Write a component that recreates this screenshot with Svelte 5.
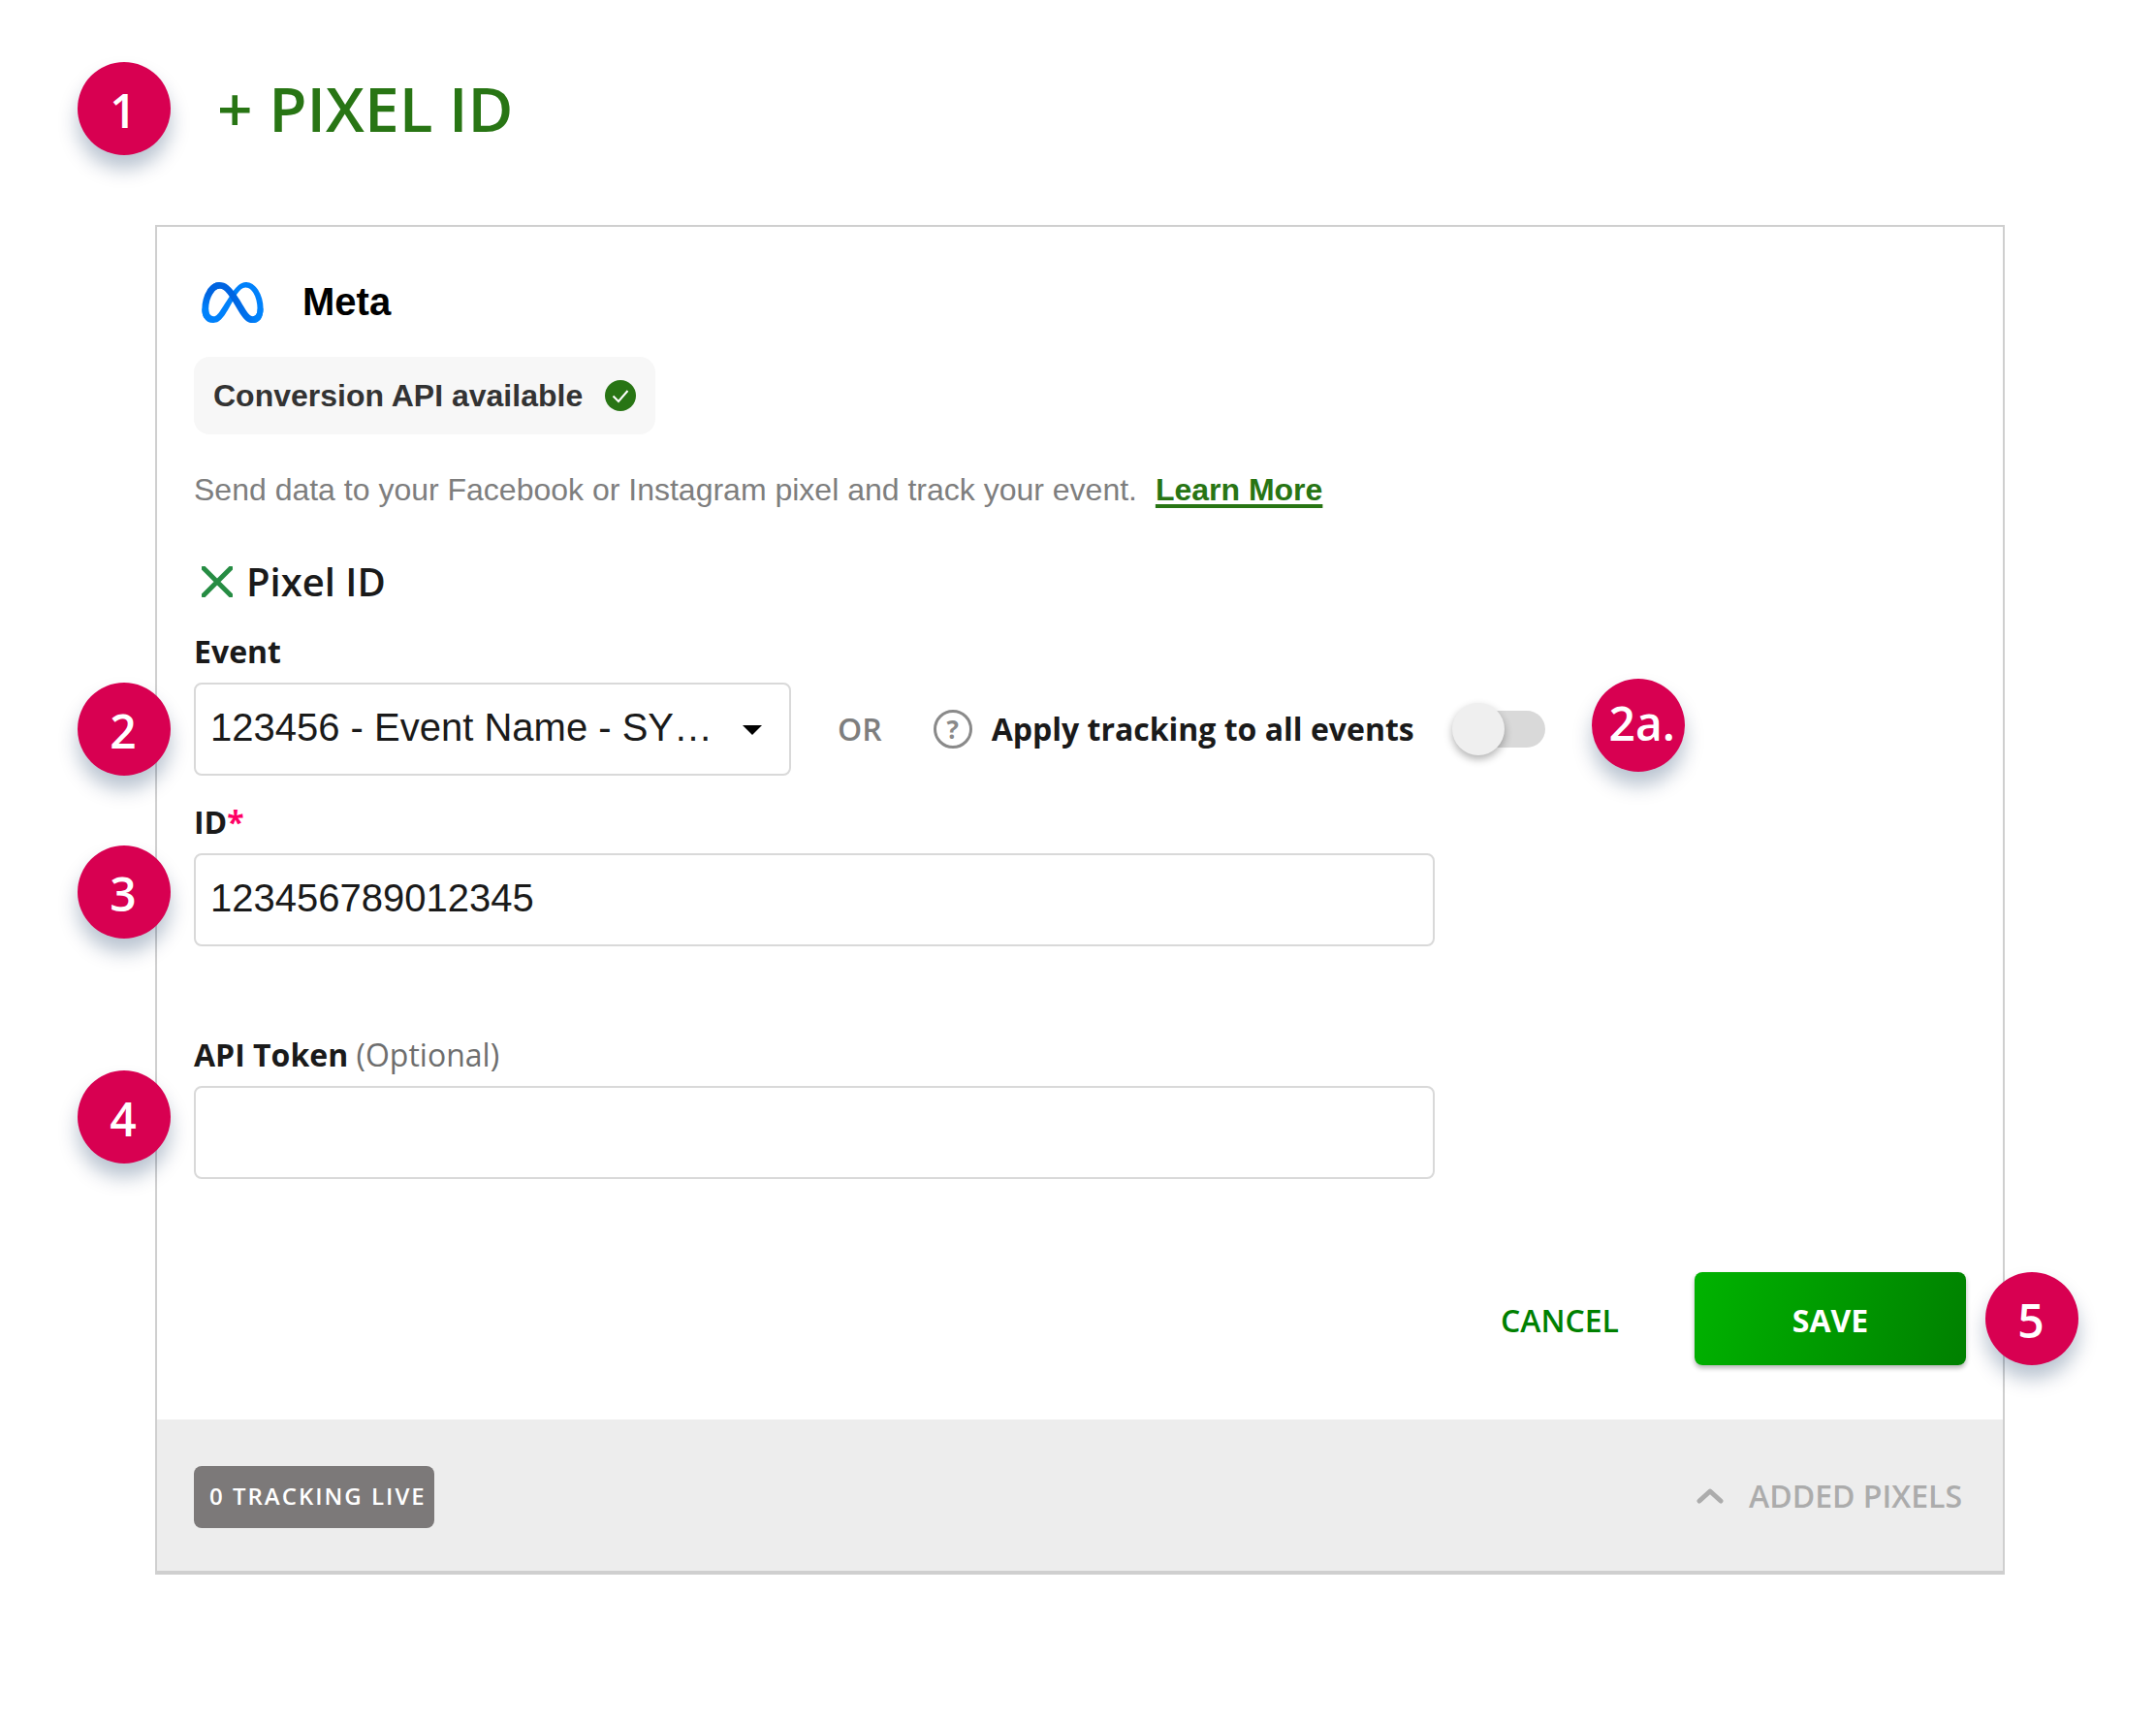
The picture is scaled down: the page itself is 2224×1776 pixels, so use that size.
<script>
  let event = "123456";
  let allEvents = false;
  let pixelId = "123456789012345";
  let apiToken = "";

  const events = [{ id: "123456", label: "123456 - Event Name - SY…" }];
</script>

<style>
  :global(body) {
    background: #fff;
  }
  main {
    padding: 64px 156px 152px 160px;
    font-family: "Open Sans", sans-serif;
    font-size: 32px;
    line-height: 48px;
    color: #1a1a1a;
  }
  button,
  input,
  select {
    box-sizing: border-box;
    margin: 0;
    font-family: inherit;
    font-size: inherit;
    line-height: inherit;
    color: inherit;
  }
  button {
    border: 0;
    padding: 0;
    background: none;
    cursor: pointer;
  }
  header {
    display: flex;
    align-items: center;
    gap: 48px;
    margin-left: -80px;
    margin-bottom: 72px;
  }
  .add-pixel {
    font-size: 64px;
    line-height: 80px;
    font-weight: 600;
    color: #287514;
  }

  /* numbered steps */
  .step {
    display: flex;
    align-items: center;
    justify-content: center;
    flex: none;
    box-sizing: border-box;
    width: 96px;
    height: 96px;
    padding: 4px 2px 0 0;
    border-radius: 50%;
    background: #d80051;
    box-shadow: 0 14px 20px rgba(3, 39, 87, 0.28);
    color: #fff;
    font-size: 48px;
    font-weight: 600;
  }
  .step.left {
    position: absolute;
    left: -120px;
  }
  .step.event {
    top: 56px;
  }
  .step.id {
    top: 48px;
  }
  .step.token {
    top: 40px;
  }
  .step.save {
    position: absolute;
    top: 0;
    right: -116px;
  }
  .step.inline {
    margin-left: 48px;
    margin-bottom: 8px;
    padding: 0 0 4px 8px;
  }

  .card {
    border: 2px solid #cfcfcf;
    border-bottom-width: 4px;
  }
  form {
    padding: 54px 38px 56px;
  }
  .brand {
    display: flex;
    align-items: center;
    gap: 40px;
    margin-bottom: 32px;
    padding-left: 8px;
  }
  .brand svg {
    width: 64px;
    height: 42px;
  }
  h2 {
    margin: 0;
    padding-bottom: 2px;
    font-family: "Liberation Sans", Arial, sans-serif;
    font-size: 40px;
    line-height: 46px;
    font-weight: 700;
    color: #000;
  }
  .chip {
    display: inline-flex;
    align-items: center;
    gap: 23px;
    padding: 16px 20px;
    border-radius: 16px;
    background: #f7f7f7;
    font-family: "Liberation Sans", Arial, sans-serif;
    line-height: 50px;
    height: 48px;
    font-weight: 700;
    color: #333;
  }
  .chip svg {
    width: 32px;
    height: 32px;
  }
  .about {
    margin: 32px 0 46px;
    font-family: "Liberation Sans", Arial, sans-serif;
    line-height: 50px;
    color: #7e7e7e;
  }
  .about a {
    margin-left: 10px;
    font-weight: 700;
    color: #287514;
    text-decoration: underline;
    text-decoration-thickness: 4px;
    text-underline-offset: 4px;
  }
  .pixel {
    display: flex;
    align-items: center;
    gap: 14px;
    margin-bottom: 24px;
    padding-left: 8px;
  }
  .pixel button {
    display: flex;
  }
  .pixel svg {
    width: 32px;
    height: 32px;
  }
  h3 {
    margin: 0;
    font-size: 40px;
    font-weight: 600;
  }
  .field {
    position: relative;
    display: flex;
    flex-direction: column;
    gap: 8px;
    margin-bottom: 24px;
  }
  .field.wide {
    margin-bottom: 88px;
  }
  label {
    font-weight: 700;
  }
  .required {
    color: #ff0066;
  }
  .optional {
    font-weight: 400;
    color: #6e6e6e;
  }
  .control {
    height: 96px;
    width: 100%;
    max-width: 1280px;
    padding: 0 15px 4px;
    border: 2px solid #d9d9d9;
    border-radius: 8px;
    background: #fff;
    font-family: "Liberation Sans", Arial, sans-serif;
    font-size: 40px;
    outline: none;
  }
  .row {
    display: flex;
    align-items: center;
    height: 96px;
  }
  .select {
    position: relative;
    flex: 0 1 616px;
  }
  select {
    display: block;
    appearance: none;
  }
  .select svg {
    position: absolute;
    right: 30px;
    top: 44px;
    width: 20px;
    height: 10px;
    pointer-events: none;
  }
  .or {
    margin: 0 53px 0 48px;
    font-weight: 600;
    color: #7e7e7e;
  }
  .help {
    display: flex;
    align-items: center;
    justify-content: center;
    width: 40px;
    height: 40px;
    margin-right: 20px;
    border: 3px solid #8a8a8a;
    border-radius: 50%;
    font-size: 26px;
    font-weight: 700;
    color: #8a8a8a;
  }
  .toggle {
    position: relative;
    appearance: none;
    width: 96px;
    height: 54px;
    margin-left: 39px;
    cursor: pointer;
  }
  .toggle::before,
  .toggle::after {
    content: "";
    position: absolute;
  }
  .toggle::before {
    inset: 8px 0 8px 8px;
    border-radius: 19px;
    background: #d9d9d9;
  }
  .toggle::after {
    top: 0;
    left: 0;
    width: 54px;
    height: 54px;
    border-radius: 50%;
    background: #efefef;
    box-shadow: 0 4px 8px rgba(0, 0, 0, 0.3);
  }
  .toggle:checked::after {
    left: auto;
    right: 0;
  }
  .actions {
    position: relative;
    display: flex;
    align-items: center;
    justify-content: flex-end;
    gap: 78px;
    margin-top: 96px;
  }
  .field.last {
    margin-bottom: 0;
  }
  .cancel,
  .submit {
    height: 96px;
    padding-top: 3px;
  }
  .cancel {
    font-weight: 600;
    color: #008000;
  }
  .submit {
    width: 280px;
    border-radius: 8px;
    background: linear-gradient(105deg, #00b300, #008000);
    box-shadow: 0 3px 5px rgba(0, 0, 0, 0.3);
    font-weight: 700;
    color: #fff;
  }
  footer {
    display: flex;
    align-items: center;
    justify-content: space-between;
    padding: 48px 42px 44px 38px;
    background: #ededed;
  }
  .live {
    padding: 7px 8px 9px 16px;
    border-radius: 8px;
    background: #7c7979;
    font-size: 24px;
    font-weight: 600;
    letter-spacing: 2px;
    color: #fff;
  }
  .added {
    display: flex;
    align-items: center;
    gap: 26px;
    padding-bottom: 3px;
    font-weight: 600;
    color: #acacac;
  }
  .added svg {
    width: 28px;
    height: 18px;
  }
</style>

<main>
  <header>
    <span class="step">1</span>
    <button type="button" class="add-pixel">+ PIXEL ID</button>
  </header>

  <section class="card">
    <form on:submit|preventDefault>
      <div class="brand">
        <svg viewBox="0 0 288 191" aria-hidden="true">
          <defs>
            <linearGradient id="stroke" gradientUnits="userSpaceOnUse" x1="62" y1="90" x2="260" y2="100">
              <stop offset="0" stop-color="#0064e1" />
              <stop offset="0.4" stop-color="#0064e1" />
              <stop offset="0.83" stop-color="#0073ee" />
              <stop offset="1" stop-color="#0082fb" />
            </linearGradient>
            <linearGradient id="loop" gradientUnits="userSpaceOnUse" x1="41" y1="126" x2="41" y2="53">
              <stop offset="0" stop-color="#0082fb" />
              <stop offset="1" stop-color="#0064e0" />
            </linearGradient>
          </defs>
          <path
            fill="#0081fb"
            d="M31.06,126c0,11,2.41,19.41,5.56,24.51A19,19,0,0,0,53.19,160c8.1,0,15.51-2,29.79-21.76,11.44-15.83,24.92-38,34-52l15.36-23.6c10.67-16.39,23-34.61,37.18-47C181.07,5.6,193.54,0,206.09,0c21.07,0,41.14,12.21,56.5,35.11,16.81,25.08,25,56.67,25,89.27,0,19.38-3.82,33.62-10.32,44.87C271,180.13,258.72,191,238.13,191V160c17.63,0,22-16.2,22-34.74,0-26.42-6.16-55.74-19.73-76.69-9.63-14.86-22.11-23.94-35.84-23.94-14.85,0-26.8,11.2-40.23,31.17-7.14,10.61-14.47,23.54-22.7,38.13l-9.06,16c-18.2,32.27-22.81,39.62-31.91,51.75C84.74,183,71.12,191,53.19,191c-21.27,0-34.72-9.21-43-23.09C3.34,156.6,0,141.76,0,124.85Z" />
          <path
            fill="url(#stroke)"
            d="M24.49,37.3C38.73,15.35,59.28,0,82.85,0c13.65,0,27.22,4,41.39,15.61,15.5,12.65,32,33.48,52.63,67.81l7.39,12.32c17.84,29.72,28,45,33.93,52.22,7.64,9.26,13,12,19.94,12,17.63,0,22-16.2,22-34.74l27.4-.86c0,19.38-3.82,33.62-10.32,44.87C271,180.13,258.72,191,238.13,191c-12.8,0-24.14-2.78-36.68-14.61-9.64-9.08-20.91-25.21-29.58-39.71L146.08,93.6c-12.94-21.62-24.81-37.74-31.68-45C107,40.71,97.51,31.23,82.35,31.23c-12.27,0-22.69,8.61-31.41,21.78Z" />
          <path
            fill="url(#loop)"
            d="M82.35,31.23c-12.27,0-22.69,8.61-31.41,21.78C38.61,71.62,31.06,99.34,31.06,126c0,11,2.41,19.41,5.56,24.51L10.14,167.91C3.34,156.6,0,141.76,0,124.85,0,94.1,8.44,62.05,24.49,37.3,38.73,15.35,59.28,0,82.85,0Z" />
        </svg>
        <h2>Meta</h2>
      </div>

      <div class="chip">
        Conversion API available
        <svg viewBox="0 0 32 32" aria-hidden="true">
          <circle cx="16" cy="16" r="16" fill="#287514" />
          <path d="M8.500 16.500L14 22L23.500 11" fill="none" stroke="#fff" stroke-width="2" />
        </svg>
      </div>

      <p class="about">
        Send data to your Facebook or Instagram pixel and track your event.
        <a href="#learn-more">Learn More</a>
      </p>

      <div class="pixel">
        <button type="button" aria-label="Remove pixel">
          <svg viewBox="0 0 32 32">
            <path d="M2 2L30 30M30 2L2 30" stroke="#268c43" stroke-width="5" stroke-linecap="round" />
          </svg>
        </button>
        <h3>Pixel ID</h3>
      </div>

      <div class="field">
        <span class="step left event">2</span>
        <label for="event">Event</label>
        <div class="row">
          <div class="select">
            <select id="event" class="control" bind:value={event}>
              {#each events as item}
                <option value={item.id}>{item.label}</option>
              {/each}
            </select>
            <svg viewBox="0 0 20 10" aria-hidden="true"><path d="M0 0H20L10 10Z" /></svg>
          </div>
          <span class="or">OR</span>
          <button type="button" class="help" aria-label="Help">?</button>
          <label for="all-events">Apply tracking to all events</label>
          <input id="all-events" class="toggle" type="checkbox" bind:checked={allEvents} />
          <span class="step inline">2a.</span>
        </div>
      </div>

      <div class="field wide">
        <span class="step left id">3</span>
        <label for="pixel-id">ID<span class="required">*</span></label>
        <input id="pixel-id" class="control" type="text" required bind:value={pixelId} />
      </div>

      <div class="field last">
        <span class="step left token">4</span>
        <label for="api-token">API Token <span class="optional">(Optional)</span></label>
        <input id="api-token" class="control" type="text" bind:value={apiToken} />
      </div>

      <div class="actions">
        <button type="button" class="cancel">CANCEL</button>
        <button type="submit" class="submit">SAVE</button>
        <span class="step save">5</span>
      </div>
    </form>

    <footer>
      <span class="live">0 TRACKING LIVE</span>
      <button type="button" class="added">
        <svg viewBox="0 0 28 18" aria-hidden="true">
          <path d="M3 14L14 4L25 14" fill="none" stroke="#acacac" stroke-width="5" stroke-linecap="round" stroke-linejoin="round" />
        </svg>
        ADDED PIXELS
      </button>
    </footer>
  </section>
</main>
